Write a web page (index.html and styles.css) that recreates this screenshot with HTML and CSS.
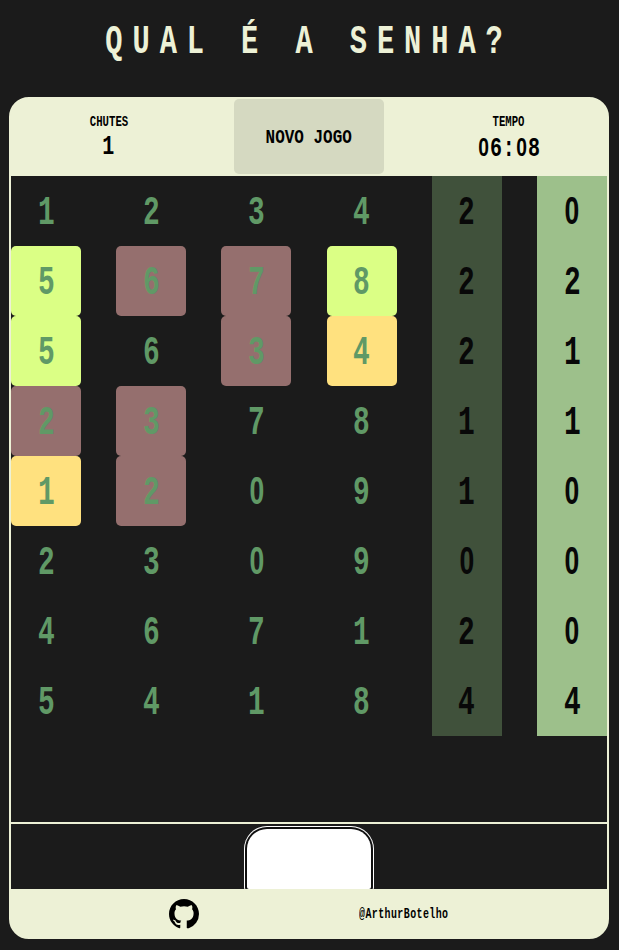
FILE: index.html
```html
<!DOCTYPE html>
<html lang="pt-BR">
<head>
<meta charset="utf-8">
<title>Qual é a senha?</title>
<link rel="stylesheet" href="styles.css">
</head>
<body>
<h1 class="title"><span>QUAL É A SENHA?</span></h1>
<main class="game">
  <header class="bar">
    <div class="stat"><span class="label">CHUTES</span><span class="value">1</span></div>
    <button class="new-game"><span>NOVO JOGO</span></button>
    <div class="stat"><span class="label">TEMPO</span><span class="value"><i class="zero">0</i>6:<i class="zero">0</i>8</span></div>
  </header>
  <section class="board" id="board"></section>
  <section class="entry"><div class="key"></div></section>
  <footer class="footer">
    <svg class="logo" viewBox="0 0 16 16"><path d="M8 0C3.58 0 0 3.58 0 8c0 3.54 2.29 6.53 5.47 7.59.4.07.55-.17.55-.38 0-.19-.01-.82-.01-1.49-2.01.37-2.53-.49-2.69-.94-.09-.23-.48-.94-.82-1.13-.28-.15-.68-.52-.01-.53.63-.01 1.08.58 1.23.82.72 1.21 1.87.87 2.33.66.07-.52.28-.87.51-1.07-1.78-.2-3.64-.89-3.64-3.95 0-.87.31-1.59.82-2.15-.08-.2-.36-1.02.08-2.12 0 0 .67-.21 2.2.82.64-.18 1.32-.27 2-.27s1.36.09 2 .27c1.53-1.04 2.2-.82 2.2-.82.44 1.1.16 1.92.08 2.12.51.56.82 1.27.82 2.15 0 3.07-1.87 3.75-3.65 3.95v3.9C9.5 15.6 9.8 15.7 10.53 15.59A8.01 8.01 0 0 0 16 8c0-4.42-3.58-8-8-8z"/></svg>
    <span class="author">@ArthurBotelho</span>
  </footer>
</main>
<script src="board.js"></script>
</body>
</html>
```
FILE: board.js
```js
// Each row: four guessed digits, then the two hint counts.
// marks: g = confirmed, r = discarded, y = maybe, . = unmarked
const rows = [
  ["123420", "...."],
  ["567822", "grrg"],
  ["563421", "g.ry"],
  ["237811", "rr.."],
  ["120910", "yr.."],
  ["230900", "...."],
  ["467120", "...."],
  ["541844", "...."]
];
const marks = { g: "hit", r: "miss", y: "maybe", ".": "plain" };
const board = document.getElementById("board");
for (const [digits, flags] of rows) {
  const row = document.createElement("div");
  row.className = "row";
  [...digits].forEach((digit, i) => {
    const cell = document.createElement("div");
    cell.className = "cell " + (i < 4 ? marks[flags[i]] : i === 4 ? "count-any" : "count-exact");
    const text = document.createElement("span");
    text.textContent = digit;
    if (digit === "0") text.className = "zero";
    cell.append(text);
    row.append(cell);
  });
  board.append(row);
}
```
FILE: styles.css
```css
* { box-sizing: border-box; }
body {
  margin: 0;
  height: 950px;
  overflow: hidden;
  background: #1b1b1b;
  font-family: "Liberation Mono", monospace;
  font-weight: bold;
}
.title {
  margin: 0;
  height: 97px;
  padding-top: 18px;
  display: flex;
  justify-content: center;
  font-size: 41px;
  line-height: 48px;
  color: #edf1d6;
}
.title span {
  white-space: nowrap;
  letter-spacing: 14.2px;
  transform: scaleX(.7);
}
.game {
  width: 600px;
  height: 842px;
  margin-left: 9px;
  display: flex;
  flex-direction: column;
  border: 2px solid #edf1d6;
  border-radius: 20px;
  background: #edf1d6;
  overflow: hidden;
}
.bar {
  height: 77px;
  flex: none;
  display: grid;
  grid-template-columns: 196px 1fr 196px;
  justify-items: center;
  padding-bottom: 2px;
}
.stat {
  display: flex;
  flex-direction: column;
  align-items: center;
  padding-top: 15px;
}
.label {
  font-size: 15px;
  line-height: 18px;
  transform: scaleX(.71);
}
.value {
  font-size: 27px;
  line-height: 30px;
  letter-spacing: 1px;
  transform: scaleX(.74);
}
.zero {
  font-family: "Liberation Sans", sans-serif;
  font-style: normal;
}
.value .zero {
  display: inline-block;
  width: 17.2px;
  text-align: center;
  letter-spacing: 0;
  font-size: 26px;
}
.new-game {
  width: 150px;
  height: 75px;
  padding: 2px 0 0;
  border: 0;
  border-radius: 5px;
  background: #d5d9c1;
  font: bold 21px "Liberation Mono", monospace;
  color: #000;
}
.new-game span {
  display: inline-block;
  transform: scaleX(.76);
}
.board {
  flex: none;
  height: 646px;
  background: #1b1b1b;
}
.row {
  display: flex;
  justify-content: space-between;
  height: 70px;
}
.cell {
  width: 70px;
  display: flex;
  align-items: center;
  justify-content: center;
  padding-top: 4px;
  border-radius: 5px;
  font-size: 41px;
  color: #609966;
}
.cell span { transform: scaleX(.68); }
.cell .zero {
  font-size: 39px;
  padding-bottom: 4px;
}
.hit { background: #dbff85; }
.miss { background: #956f6e; }
.maybe { background: #ffe17f; }
.count-any,
.count-exact {
  border-radius: 0;
  color: #080808;
}
.count-any { background: #40513b; }
.count-exact { background: #9dc08b; }
.entry {
  flex: none;
  height: 67px;
  border-top: 2px solid #edf1d6;
  background: #1b1b1b;
  display: flex;
  justify-content: center;
  overflow: hidden;
  padding-top: 5px;
}
.key {
  width: 124px;
  height: 60px;
  background: #fff;
  border-radius: 20px 20px 2px 2px;
  box-shadow: 0 0 0 2px #101010, 0 0 0 3px #fff;
}
.footer {
  flex: 1;
  display: grid;
  grid-template-columns: 346px auto;
  align-items: center;
  padding-top: 2px;
}
.logo {
  width: 30px;
  height: 30px;
  margin-left: 158px;
}
.author {
  justify-self: start;
  font-size: 14px;
  letter-spacing: .6px;
  transform: scaleX(.71);
  transform-origin: left center;
  margin-left: 2px;
}
```
